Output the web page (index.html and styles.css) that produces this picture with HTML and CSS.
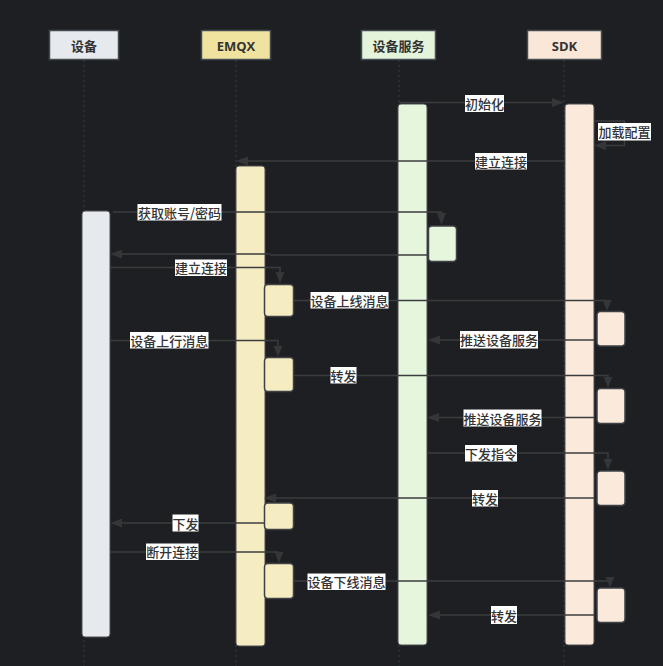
FILE: index.html
```html
<!DOCTYPE html>
<html lang="zh">
<head>
<meta charset="utf-8">
<title>时序图</title>
<link rel="stylesheet" href="styles.css">
</head>
<body>
<div class="canvas">
<svg class="diagram" width="663" height="666" viewBox="0 0 663 666" xmlns="http://www.w3.org/2000/svg">
  <!-- lifelines -->
  <g class="lifeline">
    <line x1="84" y1="60" x2="84" y2="666"/>
    <line x1="236" y1="60" x2="236" y2="666"/>
    <line x1="399" y1="60" x2="399" y2="666"/>
    <line x1="564" y1="60" x2="564" y2="666"/>
  </g>
  <!-- headers -->
  <g class="head">
    <rect class="c-dev" x="49.5" y="30.5" width="69" height="29"/>
    <text x="84" y="45.5">设备</text>
    <rect class="c-emqx-h" x="201.5" y="30.5" width="69" height="29"/>
    <text x="236" y="45.5" class="latin">EMQX</text>
    <rect class="c-svc-h" x="361.5" y="30.5" width="74" height="29"/>
    <text x="398.5" y="45.5">设备服务</text>
    <rect class="c-sdk-h" x="527.5" y="30.5" width="74" height="29"/>
    <text x="564.5" y="45.5" class="latin">SDK</text>
  </g>
  <!-- activation bars -->
  <g class="bar">
    <rect class="c-dev" x="82" y="211" width="28" height="426" rx="3"/>
    <rect class="c-emqx" x="236" y="166" width="29" height="480" rx="3"/>
    <rect class="c-svc" x="398" y="104" width="29" height="541" rx="3"/>
    <rect class="c-sdk" x="565" y="104" width="29" height="541" rx="3"/>
  </g>
  <!-- nested activations -->
  <g class="sub">
    <rect class="c-svc" x="428.5" y="226" width="28" height="35.5" rx="3.5"/>
    <rect class="c-emqx" x="264.5" y="284.5" width="29" height="32" rx="3.5"/>
    <rect class="c-emqx" x="264.5" y="357.5" width="29" height="34" rx="3.5"/>
    <rect class="c-emqx" x="264.5" y="503" width="29" height="26.5" rx="3.5"/>
    <rect class="c-emqx" x="264.5" y="563.5" width="29" height="35" rx="3.5"/>
    <rect class="c-sdk" x="597" y="311.5" width="28" height="34.5" rx="3.5"/>
    <rect class="c-sdk" x="597" y="388.5" width="28" height="35" rx="3.5"/>
    <rect class="c-sdk" x="597" y="471" width="28" height="34.5" rx="3.5"/>
    <rect class="c-sdk" x="597" y="588" width="28" height="34.5" rx="3.5"/>
  </g>
  <!-- messages -->
  <g class="msg">
    <path d="M399 102.5 H553"/>
    <path d="M594 121 H624.5 V145.5 H605"/>
    <path d="M564 161 H247"/>
    <path d="M113 212 H441.5 V214"/>
    <path d="M428 255 H270 M270 254 H121"/>
    <path d="M110 267.5 H280 V273"/>
    <path d="M294 300.5 H607 V301"/>
    <path d="M594 340 H439"/>
    <path d="M110 340.5 H278 V346"/>
    <path d="M294 375.5 H608 V377"/>
    <path d="M594 417.5 H438"/>
    <path d="M428 453 H608 V459"/>
    <path d="M594 498 H276"/>
    <path d="M264 523 H121"/>
    <path d="M110 552 H279 V552"/>
    <path d="M294 581 H610 V578"/>
    <path d="M594 615 H439"/>
  </g>
  <g class="head-arrow">
    <polygon points="564,102.5 552,98 552,107"/>
    <polygon points="594,145.5 606,141 606,150"/>
    <polygon points="236,161 248,156.5 248,165.5"/>
    <polygon points="441.5,225 437,213 446,213"/>
    <polygon points="110,254 122,249.5 122,258.5"/>
    <polygon points="280,283.5 275.5,272 284.5,272"/>
    <polygon points="607,311 602.5,300 611.5,300"/>
    <polygon points="428,340 440,335.5 440,344.5"/>
    <polygon points="278,357 273.5,346 282.5,346"/>
    <polygon points="608,388 603.5,377 612.5,377"/>
    <polygon points="427,417.5 439,413 439,422"/>
    <polygon points="608,470 603.5,459 612.5,459"/>
    <polygon points="264,498 276,493.5 276,502.5"/>
    <polygon points="110,523 122,518.5 122,527.5"/>
    <polygon points="279,563 274.5,552 283.5,552"/>
    <polygon points="610,587.5 605.5,577 614.5,577"/>
    <polygon points="428,615 440,610.5 440,619.5"/>
  </g>
  <!-- labels -->
  <g class="label">
    <rect x="465" y="95" width="39" height="17"/><text x="465" y="103.5">初始化</text>
    <rect x="598" y="123" width="53" height="17.5"/><text x="598.5" y="131.8">加载配置</text>
    <rect x="475" y="153" width="52" height="16.5"/><text x="475" y="161.3">建立连接</text>
    <rect x="137.5" y="204" width="84" height="16.5"/><text x="138" y="212.3">获取账号/密码</text>
    <rect x="175" y="259.5" width="52" height="16.5"/><text x="175" y="267.8">建立连接</text>
    <rect x="310.5" y="292" width="78" height="16.5"/><text x="310.5" y="300.3">设备上线消息</text>
    <rect x="460" y="331" width="78" height="17.5"/><text x="460" y="339.8">推送设备服务</text>
    <rect x="130" y="332" width="78.5" height="16.5"/><text x="130.3" y="340.3">设备上行消息</text>
    <rect x="330.5" y="367" width="26" height="16.5"/><text x="330.5" y="375.3">转发</text>
    <rect x="463.5" y="409.5" width="78" height="17"/><text x="463.5" y="418">推送设备服务</text>
    <rect x="465" y="445" width="52" height="16.5"/><text x="465" y="453.3">下发指令</text>
    <rect x="472" y="490" width="26" height="16.5"/><text x="472" y="498.3">转发</text>
    <rect x="172.5" y="514.5" width="26" height="17"/><text x="172.5" y="523">下发</text>
    <rect x="146" y="543.5" width="52.5" height="16.5"/><text x="146.3" y="551.8">断开连接</text>
    <rect x="307.5" y="573.5" width="78" height="16.5"/><text x="307.5" y="581.8">设备下线消息</text>
    <rect x="491" y="606" width="26" height="18"/><text x="491" y="615">转发</text>
  </g>
</svg>
</div>
</body>
</html>
```

FILE: styles.css
```css
html, body {
  margin: 0;
  padding: 0;
  background: #1e1f22;
}

.canvas {
  width: 663px;
  height: 666px;
  overflow: hidden;
  background: #1e1f22;
}

.diagram {
  display: block;
}

.lifeline line {
  stroke: #2a363c;
  stroke-width: 1.5;
  stroke-dasharray: 2 3;
}

.head rect {
  stroke: #454b52;
  stroke-width: 1.5;
}

.head text {
  font-family: "Open Sans", "Noto Sans CJK SC", sans-serif;
  font-size: 13px;
  font-weight: bold;
  fill: #333333;
  text-anchor: middle;
  dominant-baseline: central;
}

.c-dev { fill: #e6e9ed; }
.c-emqx-h { fill: #f0e3a0; }
.c-emqx { fill: #f5ecc1; }
.c-svc-h { fill: #e3f4da; }
.c-svc { fill: #e6f6dc; }
.c-sdk-h { fill: #fbe7d8; }
.c-sdk { fill: #fbe9db; }

.bar rect {
  stroke: #4d4f52;
  stroke-width: 1;
}

.sub rect {
  stroke: #3e4145;
  stroke-width: 1.5;
}

.msg path {
  fill: none;
  stroke: #3b3c3e;
  stroke-width: 1.5;
}

.head-arrow polygon {
  fill: #353637;
}

.label rect {
  fill: #ffffff;
}

.label text {
  font-family: "Noto Sans CJK SC", "Noto Sans", sans-serif;
  font-size: 13px;
  font-weight: 500;
  fill: #333333;
  dominant-baseline: central;
}
```
